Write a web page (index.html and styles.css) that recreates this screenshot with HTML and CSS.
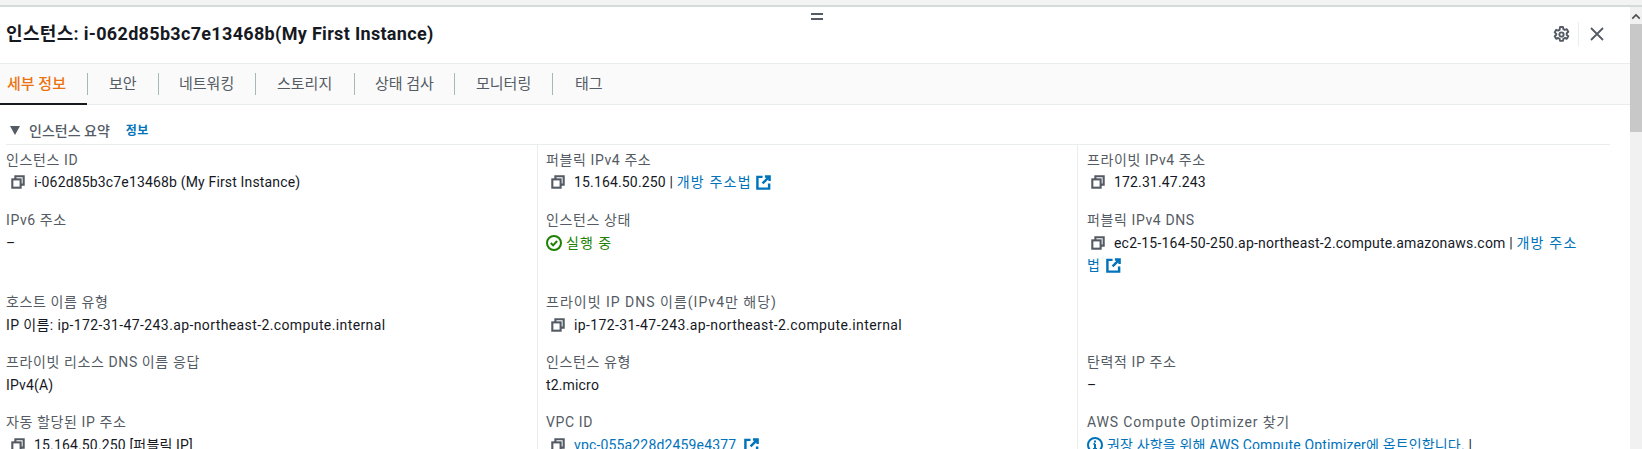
FILE: index.html
```html
<!DOCTYPE html>
<html lang="ko">
<head>
<meta charset="utf-8">
<title>인스턴스 세부 정보</title>
<link rel="stylesheet" href="styles.css">
</head>
<body>
<svg class="defs" width="0" height="0" aria-hidden="true">
  <symbol id="i-copy" viewBox="0 0 16 16"><path d="M5 5V1.5h9.5V11H11" fill="none" stroke="currentColor" stroke-width="2.4"/><rect x="1.5" y="5" width="9.5" height="9.5" fill="none" stroke="currentColor" stroke-width="2.4"/></symbol>
  <symbol id="i-ext" viewBox="0 0 16 16"><path d="M7 2H1.5v12.5H14V9" fill="none" stroke="currentColor" stroke-width="2.6"/><path d="M9.5 1.5h5v5M14 2L7 9" fill="none" stroke="currentColor" stroke-width="2.6"/></symbol>
</svg>
<div class="topstrip"></div>
<div class="handle"></div>
<div class="shell">
  <main class="panel">
    <header class="head">
      <h1 class="title">인스턴스: i-062d85b3c7e13468b(My First Instance)</h1>
      <div class="tools">
        <svg class="gear" viewBox="0 0 16 16" width="17" height="17"><path d="M6.6 1h2.8l.4 2 1.3.7 1.9-.7 1.4 2.4-1.5 1.4v1.4l1.5 1.4-1.4 2.4-1.9-.7-1.3.7-.4 2H6.6l-.4-2-1.3-.7-1.9.7-1.4-2.4 1.5-1.4V7.4L1.6 6l1.4-2.4 1.9.7 1.3-.7z" fill="none" stroke="currentColor" stroke-width="1.8" stroke-linejoin="round"/><circle cx="8" cy="8" r="2" fill="none" stroke="currentColor" stroke-width="1.8"/></svg>
        <span class="tooldiv"></span>
        <svg class="close" viewBox="0 0 14 14" width="14" height="14"><path d="M1 1l12 12M13 1L1 13" fill="none" stroke="currentColor" stroke-width="1.8"/></svg>
      </div>
    </header>
    <nav class="tabs">
      <span class="tab active t1">세부 정보</span>
      <span class="tab t2">보안</span>
      <span class="tab t3">네트워킹</span>
      <span class="tab t4">스토리지</span>
      <span class="tab t5">상태 검사</span>
      <span class="tab t6">모니터링</span>
      <span class="tab t7">태그</span>
    </nav>
    <section class="summary">
      <div class="sechead">
        <span class="caret"></span>
        <h2 class="sectitle">인스턴스 요약</h2>
        <a class="info">정보</a>
      </div>
      <div class="grid">
        <div class="col">
          <div class="item"><div class="label">인스턴스 ID</div><div class="value ind"><svg class="copy"><use href="#i-copy"/></svg>i-062d85b3c7e13468b (My First Instance)</div></div>
          <div class="item tall"><div class="label">IPv6 주소</div><div class="value">–</div></div>
          <div class="item"><div class="label">호스트 이름 유형</div><div class="value host">IP 이름: ip-172-31-47-243.ap-northeast-2.compute.internal</div></div>
          <div class="item"><div class="label">프라이빗 리소스 DNS 이름 응답</div><div class="value">IPv4(A)</div></div>
          <div class="item"><div class="label">자동 할당된 IP 주소</div><div class="value ind"><svg class="copy"><use href="#i-copy"/></svg>15.164.50.250 [퍼블릭 IP]</div></div>
        </div>
        <div class="col">
          <div class="item"><div class="label">퍼블릭 IPv4 주소</div><div class="value ind"><svg class="copy"><use href="#i-copy"/></svg>15.164.50.250 | <a class="link ko">개방 주소법 <svg class="ext"><use href="#i-ext"/></svg></a></div></div>
          <div class="item tall"><div class="label">인스턴스 상태</div><div class="value running"><svg class="check" viewBox="0 0 16 16" width="16" height="16"><circle cx="8" cy="8" r="7" fill="none" stroke="currentColor" stroke-width="2"/><path d="M4.8 8l2.3 2.4 4-4.4" fill="none" stroke="currentColor" stroke-width="2"/></svg>실행 중</div></div>
          <div class="item"><div class="label wider">프라이빗 IP DNS 이름(IPv4만 해당)</div><div class="value ind host"><svg class="copy"><use href="#i-copy"/></svg>ip-172-31-47-243.ap-northeast-2.compute.internal</div></div>
          <div class="item"><div class="label">인스턴스 유형</div><div class="value">t2.micro</div></div>
          <div class="item"><div class="label">VPC ID</div><div class="value ind"><svg class="copy"><use href="#i-copy"/></svg><a class="link vpc">vpc-055a228d2459e4377 <svg class="ext"><use href="#i-ext"/></svg></a></div></div>
        </div>
        <div class="col">
          <div class="item"><div class="label">프라이빗 IPv4 주소</div><div class="value ind"><svg class="copy"><use href="#i-copy"/></svg>172.31.47.243</div></div>
          <div class="item tall"><div class="label">퍼블릭 IPv4 DNS</div><div class="value ind dns"><svg class="copy"><use href="#i-copy"/></svg>ec2-15-164-50-250.ap-northeast-2.compute.amazonaws.com | <a class="link ko">개방 주소법 <svg class="ext"><use href="#i-ext"/></svg></a></div></div>
          <div class="item empty"></div>
          <div class="item"><div class="label">탄력적 IP 주소</div><div class="value">–</div></div>
          <div class="item"><div class="label wide">AWS Compute Optimizer 찾기</div><div class="value"><svg class="infoi" viewBox="0 0 16 16" width="16" height="16"><circle cx="8" cy="8" r="7" fill="none" stroke="currentColor" stroke-width="2"/><path d="M8 7v5M6 12h4M6.5 7H8" fill="none" stroke="currentColor" stroke-width="2"/><rect x="7" y="3.5" width="2" height="2" fill="currentColor"/></svg><a class="link">권장 사항을 위해 AWS Compute Optimizer에 옵트인합니다.</a> |</div></div>
        </div>
      </div>
    </section>
  </main>
  <aside class="scrollbar">
    <svg class="arrow" viewBox="0 0 12 8" width="10" height="7"><path d="M1.5 6.5L6 2l4.5 4.5" fill="none" stroke="currentColor" stroke-width="2"/></svg>
    <div class="thumb"></div>
  </aside>
</div>
</body>
</html>
```
FILE: styles.css
```css
* { box-sizing: border-box; }
html, body { margin: 0; padding: 0; height: 449px; overflow: hidden; background: #fff; }
body {
  font-family: Roboto, "Noto Sans CJK KR", sans-serif;
  font-size: 14px;
  line-height: 22px;
  color: #16191f;
  position: relative;
}
.defs { position: absolute; }
.topstrip { height: 7px; background: #f2f3f3; border-bottom: 2px solid #d5dbdb; }
.handle {
  position: absolute; left: 811px; top: 13px; width: 12px; height: 7px;
  border-top: 2px solid #545b64; border-bottom: 2px solid #545b64;
}
.shell { display: flex; height: 442px; }
.panel { flex: 1; min-width: 0; overflow: hidden; }
.head {
  height: 57px; display: flex; align-items: center; justify-content: space-between;
  padding: 0 26px 2px 6px; border-bottom: 1px solid #eaeded;
}
.title { margin: 0; font-size: 18px; line-height: 26px; font-weight: 700; letter-spacing: 0.32px; }
.tools { display: flex; align-items: center; color: #545b64; }
.tooldiv { width: 1px; height: 24px; background: #eaeded; margin: 0 10px 0 8px; }
.close { margin-left: 1px; }
.tabs {
  height: 41px; display: flex; align-items: stretch; background: #fafafa;
  border-bottom: 1px solid #eaeded;
}
.tab {
  position: relative; display: flex; align-items: center; color: #545b64;
  padding-bottom: 1px; white-space: nowrap; font-size: 15px;
}
.tab::before {
  content: ""; position: absolute; left: 0; top: 9px; height: 22px; width: 1px; background: #aab7b8;
}
.t1 { width: 87px; padding-left: 7px; }
.t1::before { display: none; }
.t2 { width: 71px; padding-left: 22px; }
.t3 { width: 97px; padding-left: 21px; }
.t4 { width: 99px; padding-left: 22px; }
.t5 { width: 100px; padding-left: 21px; }
.t6 { width: 98px; padding-left: 22px; }
.t7 { padding-left: 23px; }
.tab.active { color: #ec7211; font-weight: 500; }
.tab.active::after {
  content: ""; position: absolute; left: 0; right: 0; bottom: -1px; height: 2px; background: #16191f;
}
.summary { padding: 0 20px 0 6px; }
.sechead { height: 40px; display: flex; align-items: center; padding: 12px 0 0 4px; border-bottom: 1px solid #eaeded; }
.caret {
  width: 0; height: 0; border-left: 5px solid transparent; border-right: 5px solid transparent;
  border-top: 9px solid #545b64; margin-right: 9px;
}
.sectitle { margin: 0; font-size: 14px; font-weight: 500; color: #545b64; line-height: 22px; }
.info { margin-left: 16px; font-size: 12px; font-weight: 700; color: #0073bb; letter-spacing: 0.5px; }
.grid { display: grid; grid-template-columns: 531px 540px 1fr; }
.col { padding-top: 4px; }
.col + .col { border-left: 1px solid #eaeded; padding-left: 8px; padding-right: 20px; }
.col:last-child { padding-left: 9px; padding-right: 22px; }
.item { height: 60px; }
.item.tall { height: 82px; }
.item.empty { height: 60px; }
.label { color: #545b64; height: 22px; letter-spacing: 0.6px; white-space: nowrap; }
.item + .item .label { height: 23px; }
.label.wide { letter-spacing: 0.85px; }
.label.wider { letter-spacing: 1px; }
.value { min-height: 22px; white-space: normal; letter-spacing: 0.16px; }
.value.host { letter-spacing: 0.39px; }
.value.dns { letter-spacing: 0.2px; }
.ind .copy { margin: 0 9px 0 5px; }
.col:last-child .ind .copy { margin: 0 9px 0 4px; }
.copy { width: 14px; height: 14px; color: #545b64; vertical-align: -2px; display: inline-block; }
.ext { width: 15px; height: 15px; vertical-align: -3px; display: inline-block; margin-left: 0; }
.vpc .ext { margin-left: 4px; }
.link { color: #0073bb; }
.link.ko { letter-spacing: 1.2px; }
.running { color: #1d8102; letter-spacing: 1px; }
.check { vertical-align: -3px; margin-right: 4px; }
.infoi { color: #0073bb; vertical-align: -3px; margin-right: 4px; }
.scrollbar {
  width: 12px; background: #f1f1f1; display: flex; flex-direction: column; align-items: center;
  color: #505050;
}
.arrow { margin-top: 6px; }
.thumb { width: 100%; height: 108px; margin-top: 4px; background: #c8c8c8; }
```
